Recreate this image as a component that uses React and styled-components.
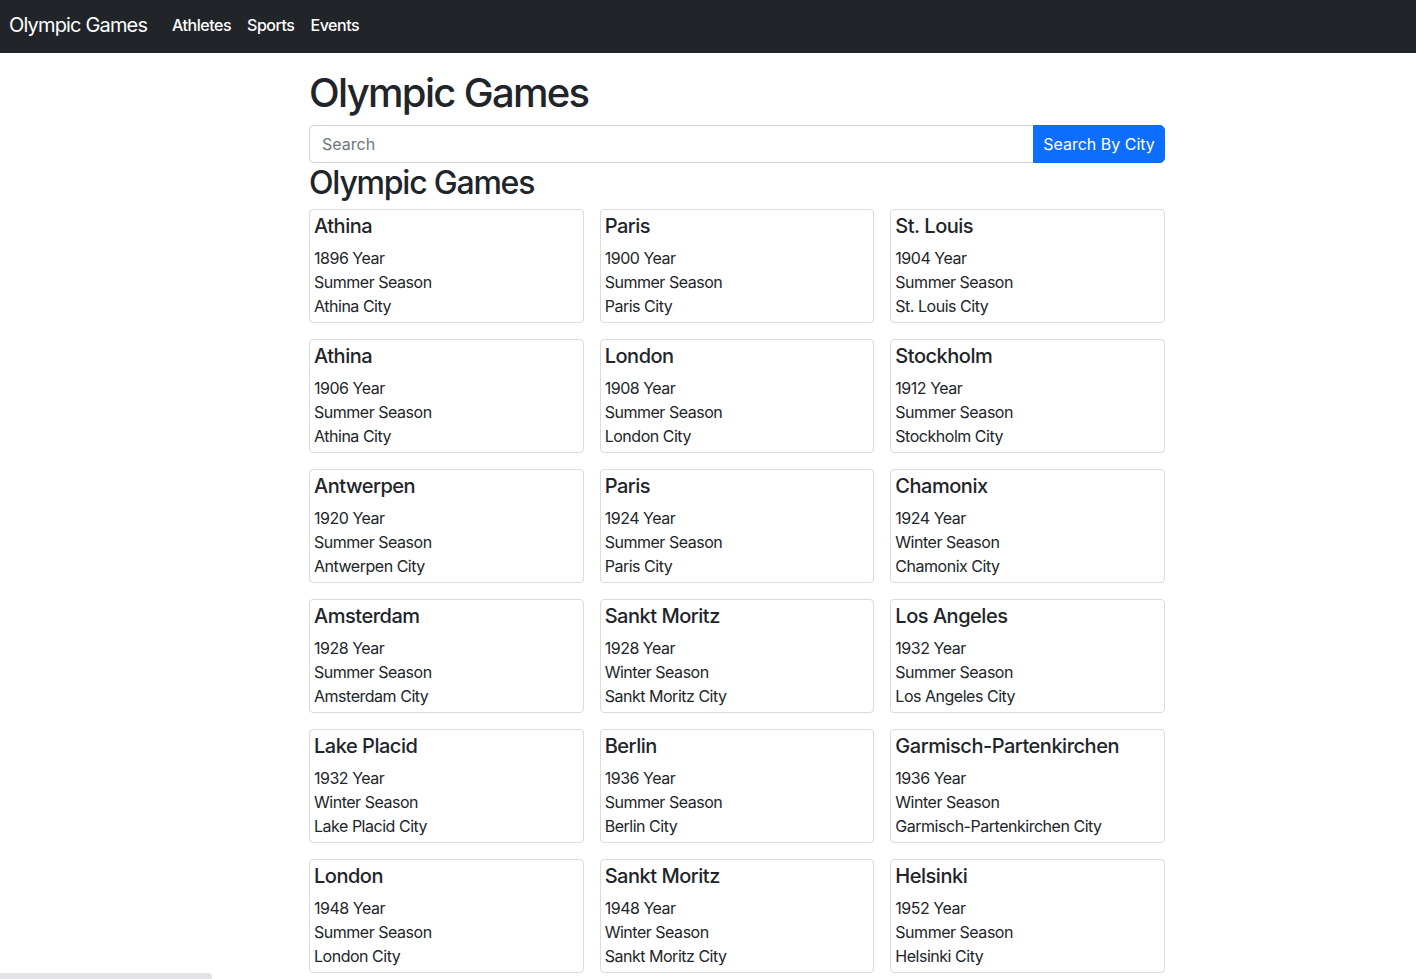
import React from 'react';
import styled, {createGlobalStyle} from 'styled-components';

const GlobalStyle = createGlobalStyle`
    html,
    body {
        margin: 0;
        padding: 0;
        font-family: Inter, 'Noto Sans', 'Liberation Sans', sans-serif;
        letter-spacing: -0.03em;
        color: #212529;
        background: #fff;
    }
    * {
        box-sizing: border-box;
    }
`;

const games = [
    ['Athina', 1896, 'Summer'],
    ['Paris', 1900, 'Summer'],
    ['St. Louis', 1904, 'Summer'],
    ['Athina', 1906, 'Summer'],
    ['London', 1908, 'Summer'],
    ['Stockholm', 1912, 'Summer'],
    ['Antwerpen', 1920, 'Summer'],
    ['Paris', 1924, 'Summer'],
    ['Chamonix', 1924, 'Winter'],
    ['Amsterdam', 1928, 'Summer'],
    ['Sankt Moritz', 1928, 'Winter'],
    ['Los Angeles', 1932, 'Summer'],
    ['Lake Placid', 1932, 'Winter'],
    ['Berlin', 1936, 'Summer'],
    ['Garmisch-Partenkirchen', 1936, 'Winter'],
    ['London', 1948, 'Summer'],
    ['Sankt Moritz', 1948, 'Winter'],
    ['Helsinki', 1952, 'Summer'],
    ['Oslo', 1952, 'Winter'],
    ['Melbourne', 1956, 'Summer'],
    ['Cortina d\'Ampezzo', 1956, 'Winter'],
];

const Navbar = styled.nav`
    display: flex;
    align-items: center;
    height: 53px;
    padding: 0 9px 4px;
    background-color: #212529;
`;

const Brand = styled.a`
    font-size: 20px;
    letter-spacing: -0.042em;
    color: #fff;
    margin-right: 25px;
`;

const NavLinks = styled.div`
    display: flex;
    gap: 16px;
`;

const NavLink = styled.a`
    font-size: 16px;
    font-weight: 500;
    color: #fff;
    cursor: pointer;
`;

const Main = styled.main`
    width: 856px;
    margin-left: 309px;
    padding-bottom: 40px;
`;

const Title = styled.h1`
    margin: 16px 0 8px;
    font-size: 40px;
    font-weight: 500;
    line-height: 1.2;
    letter-spacing: -0.042em;
`;

const SearchForm = styled.form`
    display: flex;
    height: 38px;
`;

const SearchInput = styled.input`
    flex: 1;
    min-width: 0;
    padding: 6px 12px;
    font: inherit;
    font-size: 16px;
    color: #212529;
    border: 1px solid #ced4da;
    border-right: none;
    border-radius: 5px 0 0 5px;
    outline: none;

    &::placeholder {
        color: #6c757d;
    }
`;

const SearchButton = styled.button`
    width: 132px;
    font: inherit;
    font-size: 16px;
    color: #fff;
    background-color: #0d6efd;
    border: 1px solid #0d6efd;
    border-radius: 0 5px 5px 0;
    cursor: pointer;
`;

const Subtitle = styled.h2`
    margin: 1px 0 7px;
    font-size: 32px;
    font-weight: 500;
    line-height: 1.2;
    letter-spacing: -0.038em;
`;

const Grid = styled.div`
    display: grid;
    grid-template-columns: repeat(3, 1fr);
    gap: 16px;
`;

const Card = styled.div`
    padding: 4px;
    border: 1px solid rgba(0, 0, 0, 0.14);
    border-radius: 4px;
`;

const CardTitle = styled.h5`
    margin: 0 0 8px;
    font-size: 20px;
    font-weight: 500;
    line-height: 24px;
`;

const CardLine = styled.div`
    font-size: 16px;
    line-height: 24px;
`;

const StatusBar = styled.div`
    position: fixed;
    left: 0;
    bottom: 0;
    width: 212px;
    height: 6px;
    background: #e3e3e8;
    border-top-right-radius: 4px;
`;

export default function App() {
    return (
        <>
            <GlobalStyle />
            <Navbar>
                <Brand>Olympic Games</Brand>
                <NavLinks>
                    <NavLink>Athletes</NavLink>
                    <NavLink>Sports</NavLink>
                    <NavLink>Events</NavLink>
                </NavLinks>
            </Navbar>
            <Main>
                <Title>Olympic Games</Title>
                <SearchForm onSubmit={(e) => e.preventDefault()}>
                    <SearchInput placeholder="Search" />
                    <SearchButton type="submit">Search By City</SearchButton>
                </SearchForm>
                <Subtitle>Olympic Games</Subtitle>
                <Grid>
                    {games.map(([city, year, season], i) => (
                        <Card key={i}>
                            <CardTitle>{city}</CardTitle>
                            <CardLine>{year} Year</CardLine>
                            <CardLine>{season} Season</CardLine>
                            <CardLine>{city} City</CardLine>
                        </Card>
                    ))}
                </Grid>
            </Main>
            <StatusBar />
        </>
    );
}
